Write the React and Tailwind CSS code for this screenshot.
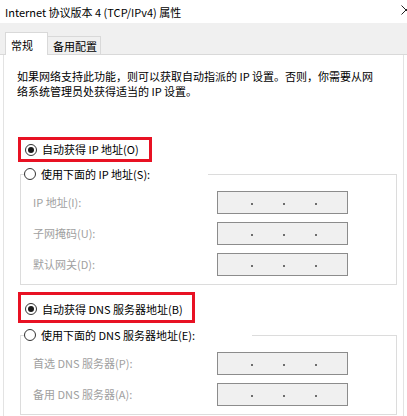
const font = { fontFamily: '"Noto Sans CJK SC", "Noto Sans", sans-serif' }

const Radio = ({ checked }) => (
  <div className="w-[12px] h-[12px] rounded-full border border-[#333333] bg-white flex items-center justify-center shrink-0">
    {checked && <div className="w-[6px] h-[6px] rounded-full bg-[#1a1a1a]" />}
  </div>
)

const IpBox = () => (
  <div className="w-[131px] h-[23px] border border-[#8c8c8c] bg-[#f0f0f0] flex items-center pl-[33px] gap-[30px] pt-[3px]">
    <div className="w-[2px] h-[2px] bg-[#6d6d6d]" />
    <div className="w-[2px] h-[2px] bg-[#6d6d6d]" />
    <div className="w-[2px] h-[2px] bg-[#6d6d6d]" />
  </div>
)

const FieldRow = ({ label }) => (
  <div className="flex items-center h-[23px]">
    <div className="w-[184px] text-[#a0a0a0] whitespace-nowrap">{label}</div>
    <IpBox />
  </div>
)

const Group = ({ legend, legendWidth, rows }) => (
  <fieldset className="ml-[16px] w-[377px] border border-[#dcdcdc] pl-[3px] pb-[8px]">
    <legend className={`${legendWidth} flex items-center gap-[5px] h-[16px] leading-4 whitespace-nowrap`}>
      <Radio />
      <span>{legend}</span>
    </legend>
    <div className="flex flex-col gap-[8px] mt-[9px] pl-[9px]">
      {rows.map((r) => (
        <FieldRow key={r} label={r} />
      ))}
    </div>
  </fieldset>
)

export default function App() {
  return (
    <div className="w-[407px] h-[416px] bg-white overflow-hidden text-[11px] text-black" style={font}>
      {/* title bar */}
      <div className="h-[23px] flex items-center justify-between pl-[5px]">
        <span className="leading-4 whitespace-nowrap">Internet 协议版本 4 (TCP/IPv4) 属性</span>
        <svg width="10" height="10" viewBox="0 0 10 10" className="mr-[-4px] mb-[4px]">
          <path d="M0.5 0.5L9.5 9.5M9.5 0.5L0.5 9.5" stroke="#222" strokeWidth="1" />
        </svg>
      </div>

      {/* tabs */}
      <div className="h-[32px] bg-[#f0f0f0] border-b border-[#d9d9d9] flex items-end pl-[5px]">
        <div className="w-[43px] h-[23px] bg-white border-x border-t border-[#d9d9d9] -mb-px pl-[5px] pt-[4px] leading-4">
          常规
        </div>
        <div className="w-[53px] h-[18px] border-r border-t border-[#d9d9d9] pl-[5px] leading-4 pt-px whitespace-nowrap">
          备用配置
        </div>
      </div>

      {/* panel */}
      <div className="mx-[3px] h-[400px] border-x border-[#e3e3e3] bg-white">
        <p className="pl-[13px] pt-[14px] leading-[15px] whitespace-nowrap">
          如果网络支持此功能，则可以获取自动指派的 IP 设置。否则，你需要从网
          <br />
          络系统管理员处获得适当的 IP 设置。
        </p>

        <div className="mt-[38px] ml-[14px] w-[134px] h-[25px] border-[3px] border-[#e81123] flex items-center gap-[5px] pl-[4px] whitespace-nowrap">
          <Radio checked />
          <span>自动获得 IP 地址(O)</span>
        </div>

        <div className="mt-[4px]">
          <Group
            legend="使用下面的 IP 地址(S):"
            legendWidth="w-[184px]"
            rows={['IP 地址(I):', '子网掩码(U):', '默认网关(D):']}
          />
        </div>

        <div className="mt-[7px] ml-[14px] w-[177px] h-[31px] border-[3px] border-[#e81123] flex items-center gap-[5px] pl-[4px] pt-[3px] whitespace-nowrap">
          <Radio checked />
          <span>自动获得 DNS 服务器地址(B)</span>
        </div>

        <div className="mt-[4px]">
          <Group
            legend="使用下面的 DNS 服务器地址(E):"
            legendWidth="w-[228px]"
            rows={['首选 DNS 服务器(P):', '备用 DNS 服务器(A):']}
          />
        </div>
      </div>
    </div>
  )
}
